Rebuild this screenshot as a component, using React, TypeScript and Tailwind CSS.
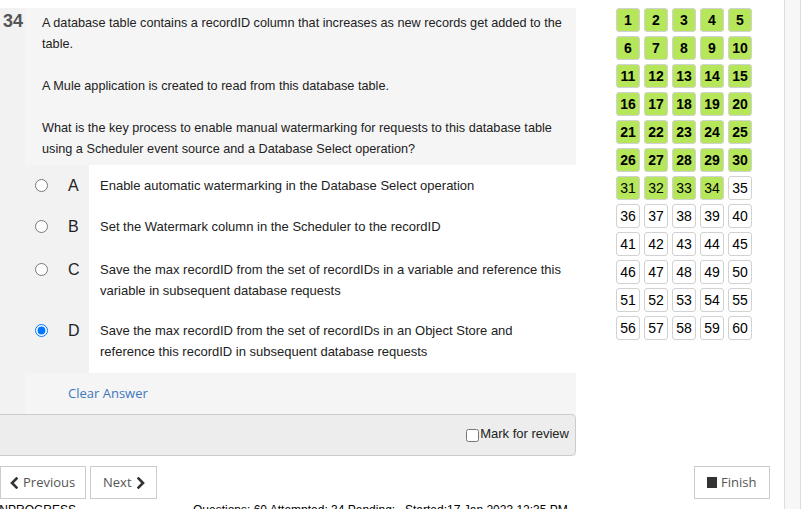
const options = [
  { letter: 'A', text: 'Enable automatic watermarking in the Database Select operation', pad: 'pt-[10px] pb-[10px]' },
  { letter: 'B', text: 'Set the Watermark column in the Scheduler to the recordID', pad: 'pt-[10px] pb-[12px]' },
  {
    letter: 'C',
    text: 'Save the max recordID from the set of recordIDs in a variable and reference this variable in subsequent database requests',
    pad: 'pt-[10px] pb-[9px]',
  },
  {
    letter: 'D',
    text: 'Save the max recordID from the set of recordIDs in an Object Store and reference this recordID in subsequent database requests',
    pad: 'pt-[10px] pb-[11px]',
    checked: true,
  },
]

const numbers = Array.from({ length: 60 }, (_, i) => i + 1)

function Chevron({ dir }: { dir: 'left' | 'right' }) {
  return (
    <svg width="8" height="12" viewBox="0 0 8 12" className="shrink-0">
      <polyline
        points={dir === 'left' ? '6.5,1.5 2,6 6.5,10.5' : '1.5,1.5 6,6 1.5,10.5'}
        fill="none"
        stroke="#333"
        strokeWidth="2.6"
        strokeLinecap="square"
      />
    </svg>
  )
}

function NumberGrid() {
  return (
    <div className="ml-[40px] grid grid-cols-5 gap-[4px] h-fit font-['Liberation_Sans',Arial,sans-serif]">
      {numbers.map((n) => (
        <div
          key={n}
          className={
            n <= 34
              ? n <= 30
                ? 'w-[24px] h-[24px] flex items-center justify-center rounded-[3px] border border-[#d2d2d2] bg-[#b6e65a] text-[14px] font-bold text-black'
                : 'w-[24px] h-[24px] flex items-center justify-center rounded-[3px] border border-[#d2d2d2] bg-[#b6e65a] text-[14px] text-black'
              : 'w-[24px] h-[24px] flex items-center justify-center rounded-[3px] border border-[#d2d2d2] bg-white text-[14px] text-black'
          }
        >
          {n}
        </div>
      ))}
    </div>
  )
}

export default function App() {
  return (
    <div className="w-[811px] h-[509px] overflow-hidden bg-white flex">
      <div className="w-[775px] flex flex-col pt-[3px] shrink-0">
        <div className="h-px bg-[#cccccc]" />

        <div className="flex mt-[5px]">
          {/* question panel */}
          <div className="w-[576px] bg-[#f2f2f2] font-['Liberation_Sans',Arial,sans-serif]">
            <div className="flex">
              <div className="w-[25px] pl-[3px] pt-[3px] text-[18px] leading-[21px] font-bold text-[#555]">34</div>
              <div className="flex-1 bg-[#f5f5f5] pl-[17px] pr-[6px] pt-[5px] pb-[5px] text-[12.7px] leading-[21px] text-[#222]">
                A database table contains a recordID column that increases as new records get added to the table.
                <br />
                <br />
                A Mule application is created to read from this database table.
                <br />
                <br />
                What is the key process to enable manual watermarking for requests to this database table using a
                Scheduler event source and a Database Select operation?
              </div>
            </div>

            {options.map((o) => (
              <div key={o.letter} className="flex">
                <div className={`w-[89px] flex items-start ${o.pad}`}>
                  <input
                    type="radio"
                    readOnly
                    checked={!!o.checked}
                    className="m-0 ml-[35px] mt-[4px] w-[13px] h-[13px]"
                  />
                  <span className="ml-[20px] text-[16px] leading-[21px] text-[#222]">{o.letter}</span>
                </div>
                <div className={`flex-1 bg-white pl-[11px] pr-[12px] text-[13px] leading-[21px] text-[#222] ${o.pad}`}>
                  {o.text}
                </div>
              </div>
            ))}

            <div className="ml-[25px] h-[41px] bg-[#f5f5f5] pl-[43px] flex items-center font-['Open_Sans',sans-serif] text-[13px] text-[#3e78bd]">
              Clear Answer
            </div>

            <div className="h-[42px] bg-[#ededed] border border-l-0 border-[#cccccc] rounded-r-[5px] flex items-center justify-end pr-[6px] text-[13px] text-[#222]">
              <input type="checkbox" readOnly className="m-0 w-[13px] h-[13px]" />
              <span className="ml-[1px] -mt-[3px]">Mark for review</span>
            </div>
          </div>

          <NumberGrid />
        </div>

        <div className="mt-[5px] h-px bg-[#cccccc]" />

        <div className="flex justify-between mt-[5px] font-['Open_Sans',sans-serif] text-[13px] text-[#555]">
          <div className="flex gap-[4px]">
            <div className="w-[86px] h-[33px] border border-[#cccccc] bg-white flex items-center pl-[9px]">
              <Chevron dir="left" />
              <span className="ml-[5px]">Previous</span>
            </div>
            <div className="w-[67px] h-[33px] border border-[#cccccc] bg-white flex items-center pl-[12px]">
              <span>Next</span>
              <span className="ml-[5px] flex"><Chevron dir="right" /></span>
            </div>
          </div>
          <div className="mr-[5px] w-[76px] h-[33px] border border-[#cccccc] bg-white flex items-center pl-[12px]">
            <div className="w-[10px] h-[11px] bg-[#333]" />
            <span className="ml-[4px]">Finish</span>
          </div>
        </div>

        <div className="flex mt-[4px] text-[12px] leading-[14px] text-black font-['Liberation_Sans',Arial,sans-serif] whitespace-nowrap">
          <div className="w-[193px] -ml-[4px]">INPROGRESS</div>
          <div className="w-[212px] ml-[4px]">Questions: 60 Attempted: 34 Pending:</div>
          <div>Started:17 Jan 2023 12:35 PM</div>
        </div>
      </div>

      <div className="ml-[9px] w-[17px] h-full border-x border-[#dddddd] bg-[#f7f7f7]" />
    </div>
  )
}
